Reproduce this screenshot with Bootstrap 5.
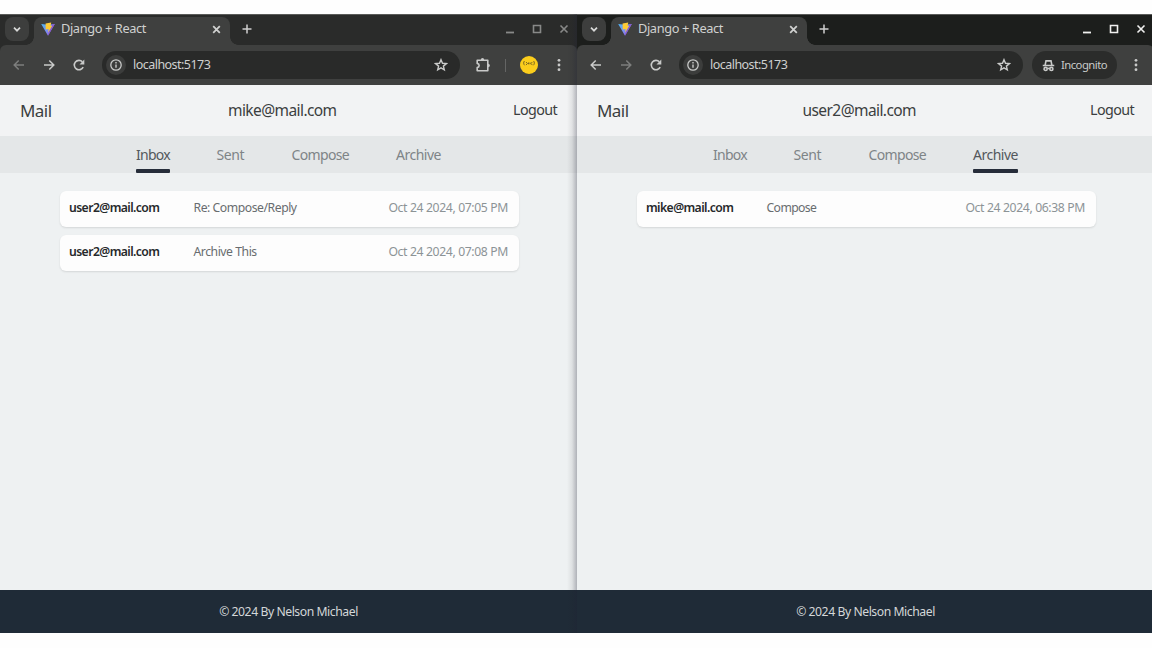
<!DOCTYPE html>
<html lang="en">
<head>
<meta charset="utf-8">
<meta name="viewport" content="width=device-width, initial-scale=1">
<title>Django + React</title>
<link href="https://cdn.jsdelivr.net/npm/bootstrap@5.3.0/dist/css/bootstrap.min.css" rel="stylesheet">
<style>
body{font-family:"Noto Sans","Liberation Sans",sans-serif;background:#fefefe;overflow:hidden;color:#3b3e40}
.desk{height:619px;margin-top:14px;width:1154px}
.win{width:577px;background:#eef1f2;white-space:nowrap}
.win svg{display:block;flex:none}
.strip{height:31px;background:#2a2b2a;padding:2px 0 0 5px;border-top:1px solid #5a5b59}
.win-b .strip{background:#1c1e1c}
.win-a .under{--strip:#2a2b2a}
.win-b .under{--strip:#1c1e1c}
.chev{width:24px;height:24px;border-radius:8px;background:#3d3e3d}
.tab{width:196px;height:28px;margin-left:5px;padding:0 8px 4px 7px;border-radius:8px 8px 0 0;background:#3f403f;color:#d0d1d0}
.tab::before,.tab::after{content:"";position:absolute;bottom:0;width:8px;height:8px}
.tab::before{left:-8px;background:radial-gradient(circle at 0 0,transparent 7.5px,#3f403f 8px)}
.tab::after{right:-8px;background:radial-gradient(circle at 100% 0,transparent 7.5px,#3f403f 8px)}
.t-title{font-size:12.8px;letter-spacing:-.39px;margin-left:6px;line-height:22px;padding-bottom:2px}
.ctl{width:27px;height:24px;color:#888988}
.win-b .ctl{color:#f0f0ef}
.under{background:var(--strip);height:40px}
.toolbar{height:40px;background:#3f403f;border-radius:6px 6px 0 0;padding-left:4px;color:#c9cac9}
.ic{width:30px;height:28px}
.new{width:33px;height:24px}
.dim{color:#7d7e7d}
.addr{height:28px;border-radius:14px;background:#292a29;margin-left:8px;padding:0 4px 0 4px;width:358px}
.win-b .addr{width:344px}
.info{width:20px;height:20px;border-radius:50%;background:#3c3d3c}
.url{font-size:12.5px;letter-spacing:-.53px;margin-left:7px;line-height:26px;color:#cfd0cf}
.sep{width:1px;height:13px;background:#646564;margin-left:7px}
.incog{width:85px;height:28px;border-radius:14px;background:#2b2c2b;margin-left:9px;padding-left:10px}
.incog span{font-size:11.3px;letter-spacing:-.54px;margin-left:6px;color:#c9cac9}
.face{width:18px;height:18px;border-radius:50%;background:#fbcd1c}
.more{margin-right:15.5px}
.win-a .more{margin-left:18px}
.flip{transform:scaleX(-1)}
.head{height:51px;background:#f2f3f4;padding:0 20px 0 20px}
.brand{font-size:17px;letter-spacing:-.56px}
.who{font-size:15.5px;letter-spacing:-.58px}
.out{font-size:14.3px;letter-spacing:-.6px;padding-bottom:1px}
.menu{height:37px;background:#e4e7e8;padding-left:136px;font-size:14px;color:#7e8487}
.menu a{color:inherit;text-decoration:none;height:37px;line-height:38px;margin-right:47px;position:relative}
.menu a.on{color:#53585c}
.menu a.on::after{content:"";position:absolute;left:0;right:0;bottom:0;height:4px;border-radius:1px;background:#262d3a}
.m1{width:33.5px;letter-spacing:-.72px}.m2{width:28px;letter-spacing:-.45px}.m3{width:57.5px;letter-spacing:-.65px}.m4{width:45px;letter-spacing:-.5px}
.list{padding:18px 58px 0 60px;gap:8px}
.msg{height:36px;background:#fdfdfd;border-radius:6px;box-shadow:0 1px 2px rgba(40,40,40,.13);padding:0 9px;font-size:12.2px;line-height:34px;color:#686c6f}
.from{font-weight:600;color:#26292b;letter-spacing:-.58px;margin-right:33px}
.win-a .from{width:91.5px}.win-b .from{width:87.5px}
.subj{letter-spacing:-.45px}
.win-b .subj{letter-spacing:-.6px}
.when{letter-spacing:-.36px;color:#8c9396;margin-right:2px}
.foot{height:43px;background:#1f2b37;color:#d4d7d9;font-size:12.2px;letter-spacing:-.44px;line-height:43px}
.win-a::after{content:"";position:absolute;right:0;top:0;bottom:0;width:10px;background:linear-gradient(90deg,transparent,rgba(30,32,40,.08) 50%,rgba(30,32,50,.3));pointer-events:none}
</style>
</head>
<body>
<svg class="position-absolute" width="0" height="0">
 <defs><linearGradient id="vg" x1="0" y1="0" x2="1" y2="1"><stop offset="0" stop-color="#4cb4f5"/><stop offset=".5" stop-color="#7a8ff0"/><stop offset="1" stop-color="#a34ee0"/></linearGradient></defs>
 <symbol id="chev" viewBox="0 0 24 24"><path d="M9 10.700l3 3 3-3" fill="none" stroke="#d8d9d8" stroke-width="1.700"/></symbol>
 <symbol id="vite" viewBox="0 0 14 14"><path d="M.2 2l4.600.4L9 2.400 13.800 2 7 13.700z" fill="url(#vg)"/><path d="M11.500 2.300l2.300-.3L7 13.700l.6-3z" fill="#8a58cc"/><path d="M4.600 1.400L10.200.500 9.600 3.900l1.600-.2-4 6.700.4-3.500-2.900.5z" fill="#fdca35"/></symbol>
 <symbol id="x" viewBox="0 0 10 10"><path d="M2 2l6 6M8 2l-6 6" fill="none" stroke="currentColor" stroke-width="1.600"/></symbol>
 <symbol id="plus" viewBox="0 0 12 12"><path d="M6 1.500v9M1.500 6h9" fill="none" stroke="#cfd0cf" stroke-width="1.500"/></symbol>
 <symbol id="min" viewBox="0 0 14 14"><path d="M3 10.500h8" stroke="currentColor" stroke-width="1.800"/></symbol>
 <symbol id="max" viewBox="0 0 14 14"><path d="M3.500 3.500h7v7h-7z" fill="none" stroke="currentColor" stroke-width="1.600"/></symbol>
 <symbol id="close" viewBox="0 0 14 14"><path d="M3.500 3.500l7 7M10.500 3.500l-7 7" stroke="currentColor" stroke-width="1.600"/></symbol>
 <symbol id="fwd" viewBox="0 0 14 14"><path d="M2 7h9.500M7.300 2.500L11.800 7l-4.500 4.500" fill="none" stroke="currentColor" stroke-width="1.500"/></symbol>
 <symbol id="reload" viewBox="0 0 14 14"><path d="M11.200 9.200A4.700 4.700 0 1 1 10.400 3.800" fill="none" stroke="currentColor" stroke-width="1.600"/><path d="M12.300 1.500v5H7.500z" fill="currentColor"/></symbol>
 <symbol id="info" viewBox="0 0 14 14"><circle cx="7" cy="7" r="5.200" fill="none" stroke="currentColor" stroke-width="1.300"/><path d="M7 6.500v3.300M7 4v1.400" stroke="currentColor" stroke-width="1.400"/></symbol>
 <symbol id="star" viewBox="0 0 14 14"><path d="M7 1.700l1.500 3.600 3.900.3-3 2.500.9 3.800L7 9.900l-3.300 2 .9-3.800-3-2.500 3.900-.3z" fill="none" stroke="currentColor" stroke-width="1.400"/></symbol>
 <symbol id="puz" viewBox="0 0 16 16"><path d="M2.200 3.200h10.600v10.600H2.200v-3.200c2.600-.5 2.600-3.700 0-4.200z" fill="none" stroke="currentColor" stroke-width="1.600" stroke-linejoin="round"/><path d="M5.800 3a1.700 1.900 0 0 1 3.400 0zM13 6.800a1.900 1.700 0 0 1 0 3.400z" fill="currentColor"/></symbol>
 <symbol id="dots" viewBox="0 0 6 14"><g fill="currentColor"><circle cx="3" cy="2.300" r="1.400"/><circle cx="3" cy="7" r="1.400"/><circle cx="3" cy="11.700" r="1.400"/></g></symbol>
 <symbol id="spy" viewBox="0 0 14 14"><g fill="none" stroke="currentColor" stroke-width="1.700"><path d="M.8 7h12.400M3.300 7l1-5h5.400l1 5"/><circle cx="3.900" cy="10.700" r="1.700"/><circle cx="10.100" cy="10.700" r="1.700"/><path d="M5.700 10.200h2.600"/></g></symbol>
</svg>

<div class="desk d-flex">
 <section class="win win-a position-relative d-flex flex-column flex-shrink-0">
  <div class="strip d-flex">
   <div class="chev"><svg width="24" height="24"><use href="#chev"/></svg></div>
   <div class="tab position-relative d-flex align-items-center"><svg width="14" height="14"><use href="#vite"/></svg><span class="t-title">Django + React</span><svg class="ms-auto" width="11" height="11"><use href="#x"/></svg></div>
   <div class="new d-flex align-items-center justify-content-center"><svg width="12" height="12"><use href="#plus"/></svg></div>
   <div class="ms-auto d-flex">
    <div class="ctl d-flex align-items-center justify-content-center"><svg width="14" height="14"><use href="#min"/></svg></div>
    <div class="ctl d-flex align-items-center justify-content-center"><svg width="14" height="14"><use href="#max"/></svg></div>
    <div class="ctl d-flex align-items-center justify-content-center"><svg width="14" height="14"><use href="#close"/></svg></div>
   </div>
  </div>
  <div class="under"><div class="toolbar d-flex align-items-center">
   <div class="ic dim d-flex align-items-center justify-content-center"><svg class="flip" width="14" height="14"><use href="#fwd"/></svg></div>
   <div class="ic d-flex align-items-center justify-content-center"><svg width="14" height="14"><use href="#fwd"/></svg></div>
   <div class="ic d-flex align-items-center justify-content-center"><svg width="14" height="14"><use href="#reload"/></svg></div>
   <div class="addr d-flex align-items-center"><div class="info d-flex align-items-center justify-content-center"><svg width="14" height="14"><use href="#info"/></svg></div><span class="url">localhost:5173</span><svg class="ms-auto me-2" width="14" height="14"><use href="#star"/></svg></div>
   <div class="ic ms-2 d-flex align-items-center justify-content-center"><svg width="16" height="16"><use href="#puz"/></svg></div>
   <div class="sep"></div>
   <div class="face ms-auto"><svg width="18" height="18" viewBox="0 0 18 18"><path d="M4.500 5c-1.300 1-1 3.300.2 4.300M13.500 5c1.300 1 1 3.300-.2 4.300M6 6l1.500 1.500L6 9M8.500 6.500v1.800M10 6.500v1.800M12.300 6L11 7.500 12.300 9" fill="none" stroke="#6c5c24" stroke-width=".9"/></svg></div>
   <svg class="more" width="6" height="14"><use href="#dots"/></svg>
  </div></div>
  <header class="head d-flex align-items-center justify-content-between"><span class="brand">Mail</span><span class="who">mike@mail.com</span><span class="out">Logout</span></header>
  <nav class="menu d-flex"><a class="m1 on">Inbox</a><a class="m2">Sent</a><a class="m3">Compose</a><a class="m4">Archive</a></nav>
  <main class="list d-flex flex-column flex-grow-1">
   <div class="msg d-flex"><span class="from">user2@mail.com</span><span class="subj">Re: Compose/Reply</span><span class="when ms-auto">Oct 24 2024, 07:05 PM</span></div>
   <div class="msg d-flex"><span class="from">user2@mail.com</span><span class="subj">Archive This</span><span class="when ms-auto">Oct 24 2024, 07:08 PM</span></div>
  </main>
  <footer class="foot text-center">© 2024 By Nelson Michael</footer>
 </section>

 <section class="win win-b d-flex flex-column flex-shrink-0">
  <div class="strip d-flex">
   <div class="chev"><svg width="24" height="24"><use href="#chev"/></svg></div>
   <div class="tab position-relative d-flex align-items-center"><svg width="14" height="14"><use href="#vite"/></svg><span class="t-title">Django + React</span><svg class="ms-auto" width="11" height="11"><use href="#x"/></svg></div>
   <div class="new d-flex align-items-center justify-content-center"><svg width="12" height="12"><use href="#plus"/></svg></div>
   <div class="ms-auto d-flex">
    <div class="ctl d-flex align-items-center justify-content-center"><svg width="14" height="14"><use href="#min"/></svg></div>
    <div class="ctl d-flex align-items-center justify-content-center"><svg width="14" height="14"><use href="#max"/></svg></div>
    <div class="ctl d-flex align-items-center justify-content-center"><svg width="14" height="14"><use href="#close"/></svg></div>
   </div>
  </div>
  <div class="under"><div class="toolbar d-flex align-items-center">
   <div class="ic d-flex align-items-center justify-content-center"><svg class="flip" width="14" height="14"><use href="#fwd"/></svg></div>
   <div class="ic dim d-flex align-items-center justify-content-center"><svg width="14" height="14"><use href="#fwd"/></svg></div>
   <div class="ic d-flex align-items-center justify-content-center"><svg width="14" height="14"><use href="#reload"/></svg></div>
   <div class="addr d-flex align-items-center"><div class="info d-flex align-items-center justify-content-center"><svg width="14" height="14"><use href="#info"/></svg></div><span class="url">localhost:5173</span><svg class="ms-auto me-2" width="14" height="14"><use href="#star"/></svg></div>
   <div class="incog d-flex align-items-center"><svg width="13" height="13"><use href="#spy"/></svg><span>Incognito</span></div>
   <svg class="more ms-auto" width="6" height="14"><use href="#dots"/></svg>
  </div></div>
  <header class="head d-flex align-items-center justify-content-between"><span class="brand">Mail</span><span class="who">user2@mail.com</span><span class="out">Logout</span></header>
  <nav class="menu d-flex"><a class="m1">Inbox</a><a class="m2">Sent</a><a class="m3">Compose</a><a class="m4 on">Archive</a></nav>
  <main class="list d-flex flex-column flex-grow-1">
   <div class="msg d-flex"><span class="from">mike@mail.com</span><span class="subj">Compose</span><span class="when ms-auto">Oct 24 2024, 06:38 PM</span></div>
  </main>
  <footer class="foot text-center">© 2024 By Nelson Michael</footer>
 </section>
</div>
<script src="https://cdn.jsdelivr.net/npm/bootstrap@5.3.0/dist/js/bootstrap.bundle.min.js"></script>
</body>
</html>
